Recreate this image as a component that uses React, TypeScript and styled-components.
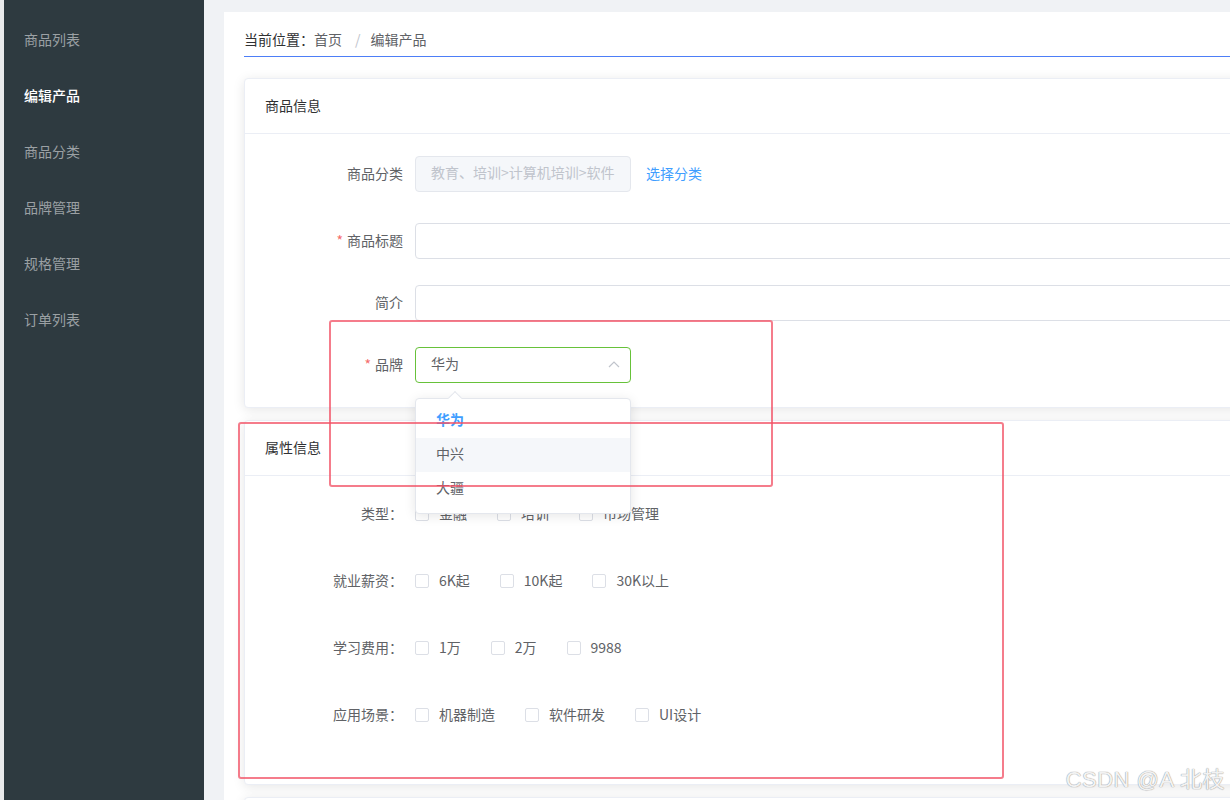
import { useState } from "react"
import styled, { createGlobalStyle } from "styled-components"

const menus = ["商品列表", "编辑产品", "商品分类", "品牌管理", "规格管理", "订单列表"]

const brands = ["华为", "中兴", "大疆"]

const attrs = [
  { label: "类型：", options: ["金融", "培训", "市场管理"] },
  { label: "就业薪资：", options: ["6K起", "10K起", "30K以上"] },
  { label: "学习费用：", options: ["1万", "2万", "9988"] },
  { label: "应用场景：", options: ["机器制造", "软件研发", "UI设计"] },
]

const App = () => {
  const [brand] = useState("华为")

  return (
    <>
      <GlobalStyle />
      <Page>
        <Strip />
        <Sidebar>
          {menus.map((m) => (
            <MenuItem key={m} $active={m === "编辑产品"}>
              {m}
            </MenuItem>
          ))}
        </Sidebar>
        <Main>
          <Panel>
            <Breadcrumb>
              <Strong>当前位置：</Strong>
              <Crumb>首页</Crumb>
              <Sep>/</Sep>
              <Crumb>编辑产品</Crumb>
            </Breadcrumb>

            <Card>
              <CardHeader>商品信息</CardHeader>
              <CardBody $top={22} $bottom={0}>
                <FormRow $gap={31}>
                  <Label>商品分类</Label>
                  <Input $disabled>教育、培训&gt;计算机培训&gt;软件</Input>
                  <Link>选择分类</Link>
                </FormRow>
                <FormRow $gap={26}>
                  <Label>
                    <Star>*</Star>商品标题
                  </Label>
                  <Input $wide />
                </FormRow>
                <FormRow $gap={26}>
                  <Label>简介</Label>
                  <Input $wide />
                </FormRow>
                <FormRow $gap={24}>
                  <Label>
                    <Star>*</Star>品牌
                  </Label>
                  <SelectBox>
                    <Input $focus>{brand}</Input>
                    <Arrow>
                      <svg width="12" height="8" viewBox="0 0 12 8">
                        <polyline points="1,7 6,2 11,7" fill="none" stroke="#c0c4cc" strokeWidth="1.2" />
                      </svg>
                    </Arrow>
                    <Dropdown>
                      <Caret />
                      {brands.map((b) => (
                        <Option key={b} $selected={b === brand} $hover={b === "中兴"}>
                          {b}
                        </Option>
                      ))}
                    </Dropdown>
                  </SelectBox>
                </FormRow>
              </CardBody>
            </Card>

            <Card>
              <CardHeader>属性信息</CardHeader>
              <CardBody $top={18} $bottom={22}>
                {attrs.map((a) => (
                  <CheckRow key={a.label}>
                    <Label>{a.label}</Label>
                    {a.options.map((o) => (
                      <CheckItem key={o}>
                        <CheckBox />
                        <CheckText>{o}</CheckText>
                      </CheckItem>
                    ))}
                  </CheckRow>
                ))}
              </CardBody>
            </Card>

            <Card>
              <EmptyBody />
            </Card>
          </Panel>
        </Main>

        <Mark style={{ left: 329, top: 320, width: 444, height: 167 }} />
        <Mark style={{ left: 238, top: 422, width: 766, height: 357 }} />
        <Watermark>CSDN @A 北枝</Watermark>
      </Page>
    </>
  )
}

export default App

const GlobalStyle = createGlobalStyle`
  html, body {
    margin: 0;
    padding: 0;
    overflow: hidden;
  }
  body {
    font-family: "Noto Sans CJK SC", "Noto Sans", sans-serif;
    font-size: 14px;
    color: #606266;
  }
  * {
    box-sizing: border-box;
  }
`

const Page = styled.div`
  position: relative;
  display: flex;
  width: 1230px;
  height: 800px;
  overflow: hidden;
  background: #f0f2f5;
`

const Strip = styled.div`
  width: 4px;
  flex-shrink: 0;
  background: #e9eaeb;
`

const Sidebar = styled.div`
  width: 200px;
  flex-shrink: 0;
  padding-top: 11px;
  background: #2e3a40;
`

const MenuItem = styled.div<{ $active?: boolean }>`
  height: 56px;
  line-height: 56px;
  padding-left: 20px;
  font-size: 14px;
  color: ${({ $active }) => ($active ? "#ffffff" : "#9ba0a4")};
  font-weight: ${({ $active }) => ($active ? 500 : 400)};
`

const Main = styled.div`
  flex: 1;
  padding: 12px 0 0 20px;
  min-width: 0;
`

const Panel = styled.div`
  width: 1060px;
  height: 100%;
  padding: 18px 0 0 20px;
  background: #ffffff;
`

const Breadcrumb = styled.div`
  display: flex;
  align-items: center;
  height: 27px;
  padding-bottom: 9px;
  line-height: 18px;
  border-bottom: 1px solid #4d7ef7;
  font-size: 14px;
`

const Strong = styled.span`
  color: #303133;
`

const Crumb = styled.span`
  color: #606266;
`

const Sep = styled.span`
  margin: 0 10px 0 13px;
  color: #c0c4cc;
`

const Card = styled.div`
  margin-top: 21px;
  border: 1px solid #ebeef5;
  border-radius: 4px;
  background: #ffffff;
  box-shadow: 0 2px 12px 0 rgba(0, 0, 0, 0.1);

  & + & {
    margin-top: 12px;
  }
`

const CardHeader = styled.div`
  padding: 16px 20px 18px;
  line-height: 20px;
  font-size: 14px;
  color: #303133;
  border-bottom: 1px solid #ebeef5;
`

const CardBody = styled.div<{ $top: number; $bottom: number }>`
  padding: ${({ $top, $bottom }) => `${$top}px 20px ${$bottom}px`};
`

const EmptyBody = styled.div`
  height: 60px;
`

const FormRow = styled.div<{ $gap: number }>`
  display: flex;
  align-items: center;
  height: 36px;
  margin-bottom: ${({ $gap }) => $gap}px;
`

const Label = styled.div`
  width: 150px;
  flex-shrink: 0;
  padding-right: 12px;
  padding-bottom: 3px;
  text-align: right;
  font-size: 14px;
  color: #606266;
`

const Star = styled.span`
  margin-right: 4px;
  color: #f56c6c;
`

const Input = styled.div<{ $disabled?: boolean; $wide?: boolean; $focus?: boolean }>`
  width: ${({ $wide }) => ($wide ? "900px" : "216px")};
  height: 36px;
  line-height: 31px;
  padding: 0 15px;
  border: 1px solid
    ${({ $disabled, $focus }) => ($focus ? "#67c23a" : $disabled ? "#e4e7ed" : "#dcdfe6")};
  border-radius: 4px;
  background: ${({ $disabled }) => ($disabled ? "#f5f7fa" : "#ffffff")};
  color: ${({ $disabled }) => ($disabled ? "#c0c4cc" : "#606266")};
  font-size: 14px;
  white-space: nowrap;
  overflow: hidden;
`

const Link = styled.span`
  margin-left: 15px;
  padding-bottom: 3px;
  color: #409eff;
  font-size: 14px;
`

const SelectBox = styled.div`
  position: relative;
`

const Arrow = styled.span`
  position: absolute;
  right: 11px;
  top: 13px;
  display: flex;
`

const Dropdown = styled.div`
  position: absolute;
  top: 51px;
  left: 0;
  width: 216px;
  padding: 5px 0 7px;
  border: 1px solid #e4e7ed;
  border-radius: 4px;
  background: #ffffff;
  box-shadow: 0 2px 12px 0 rgba(0, 0, 0, 0.1);
  z-index: 5;
`

const Caret = styled.span`
  position: absolute;
  top: -6px;
  left: 34px;
  width: 10px;
  height: 10px;
  background: #ffffff;
  border-left: 1px solid #e4e7ed;
  border-top: 1px solid #e4e7ed;
  transform: rotate(45deg);
`

const Option = styled.div<{ $selected?: boolean; $hover?: boolean }>`
  position: relative;
  height: 34px;
  line-height: 31px;
  padding: 0 20px;
  font-size: 14px;
  color: ${({ $selected }) => ($selected ? "#409eff" : "#606266")};
  font-weight: ${({ $selected }) => ($selected ? 700 : 400)};
  background: ${({ $hover }) => ($hover ? "#f5f7fa" : "transparent")};
`

const CheckRow = styled.div`
  display: flex;
  align-items: center;
  height: 40px;
  margin-bottom: 27px;
`

const CheckItem = styled.label`
  display: flex;
  align-items: center;
  margin-right: 30px;
`

const CheckBox = styled.span`
  width: 14px;
  height: 14px;
  border: 1px solid #dcdfe6;
  border-radius: 2px;
  background: #ffffff;
`

const CheckText = styled.span`
  padding-left: 10px;
  padding-bottom: 2px;
  font-size: 14px;
  color: #606266;
`

const Mark = styled.div`
  position: absolute;
  border: 2px solid rgba(242, 80, 100, 0.75);
  border-radius: 3px;
  pointer-events: none;
  z-index: 10;
`

const Watermark = styled.div`
  position: absolute;
  right: 5px;
  bottom: 7px;
  font-family: "Liberation Sans", "Noto Sans CJK SC", sans-serif;
  font-size: 22px;
  letter-spacing: 0.5px;
  color: rgba(255, 255, 255, 0.9);
  text-shadow: 0 0 1px #9a9a9a, 0 0 1px #9a9a9a;
  z-index: 11;
`
